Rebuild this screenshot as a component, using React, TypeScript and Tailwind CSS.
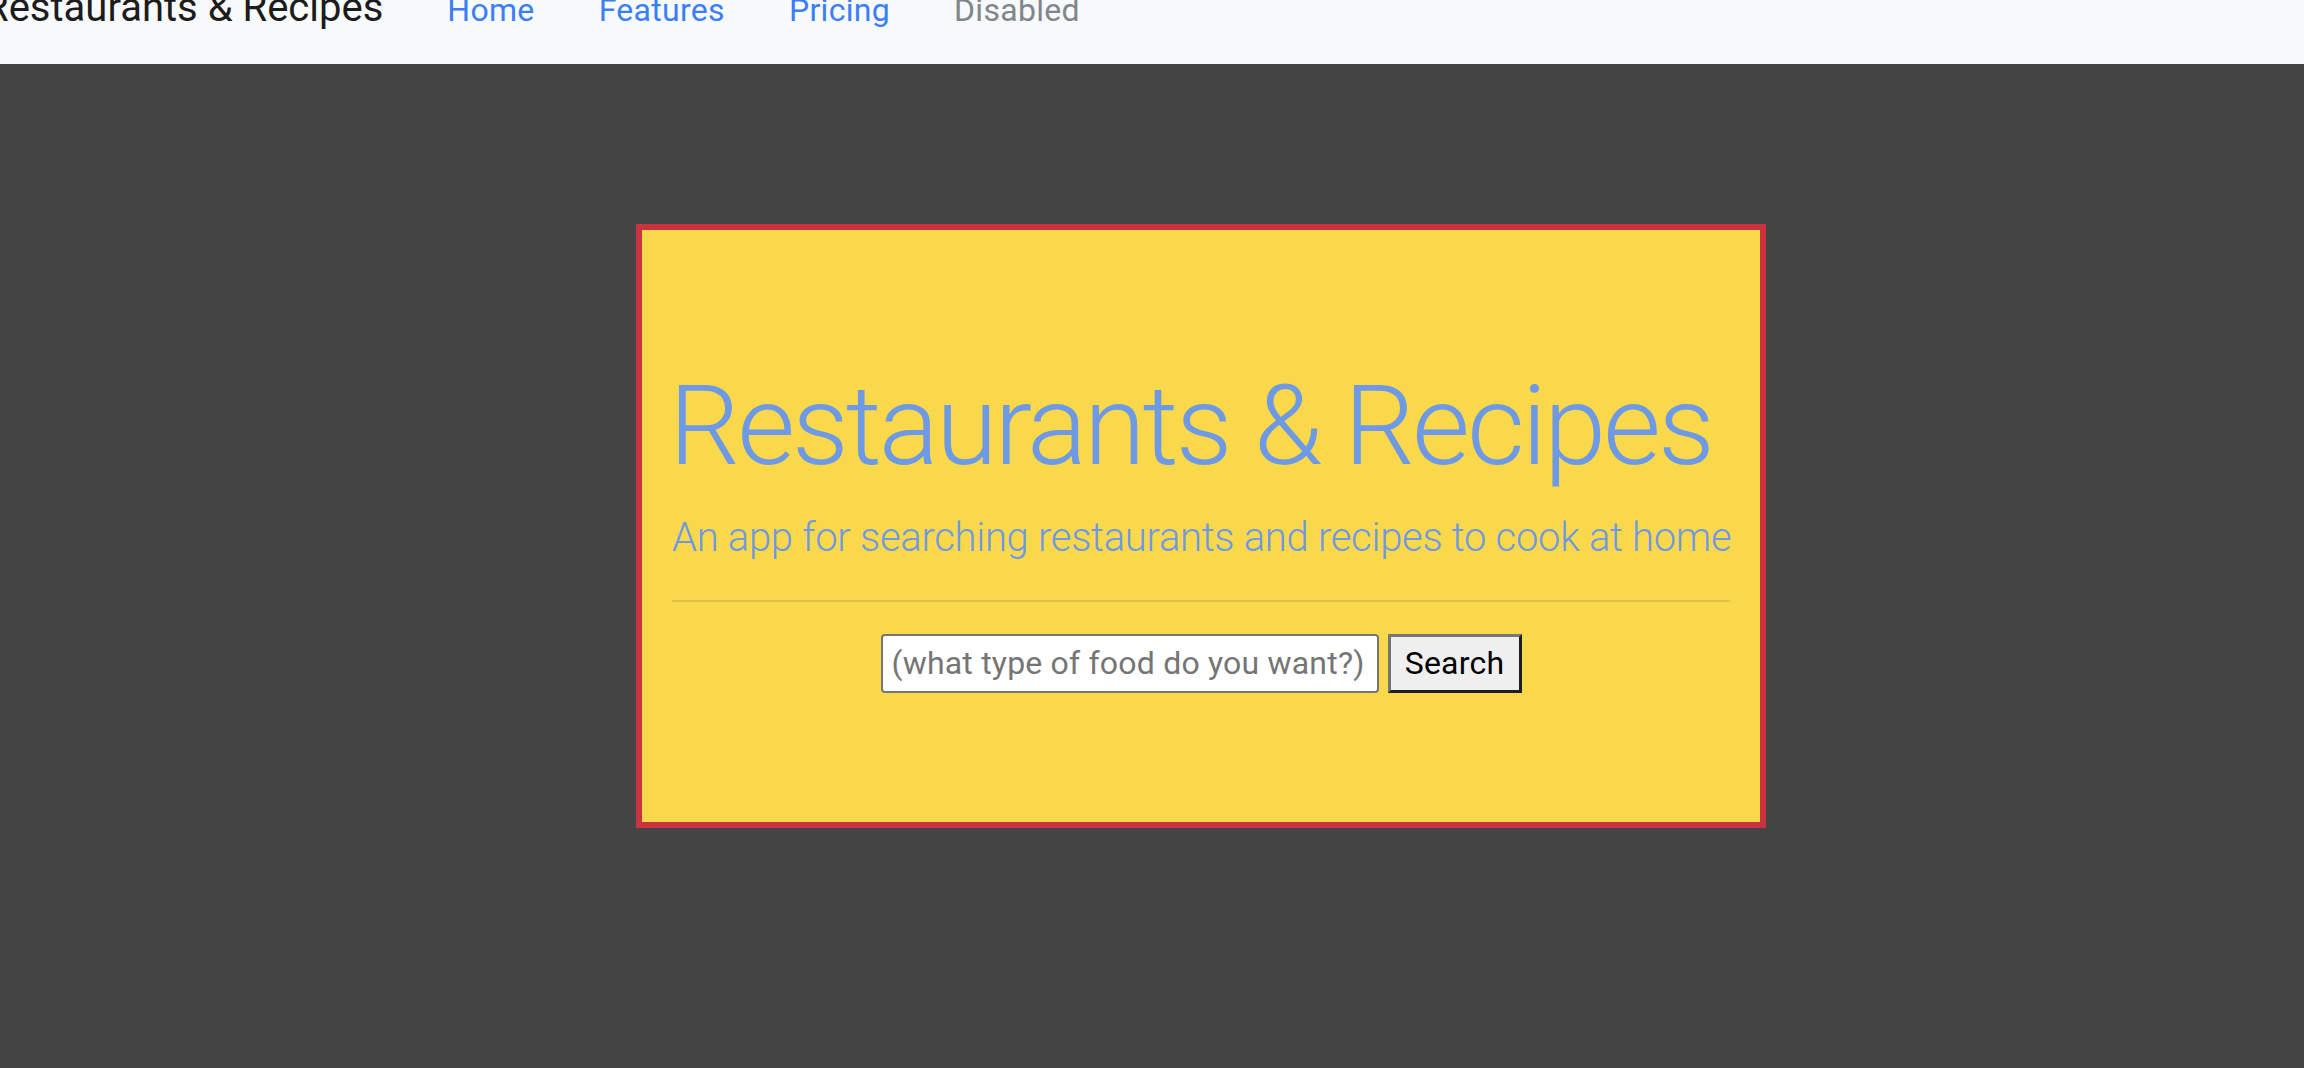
import { useState } from 'react'

const NAV_LINKS = ['Home', 'Features', 'Pricing']

export default function App() {
  const [query, setQuery] = useState('')

  return (
    <div className="min-h-screen bg-[#444444] font-['Roboto',sans-serif]">
      {/* navbar, top is cut off in the screenshot */}
      <nav className="h-[64px] bg-[#f8f9fa] overflow-hidden">
        <div className="-mt-[22px] flex items-baseline gap-[64px] -ml-[16px] whitespace-nowrap">
          <a className="text-[40px] leading-[1.5] text-[#1c1c1c]">Restaurants &amp; Recipes</a>
          {NAV_LINKS.map((link) => (
            <a key={link} className="text-[32px] leading-[1.5] text-[#3a7ff6] tracking-[0.3px]">
              {link}
            </a>
          ))}
          <a className="text-[32px] leading-[1.5] text-[#80868b] tracking-[0.3px]">Disabled</a>
        </div>
      </nav>

      {/* hero */}
      <section className="pt-[160px]">
        <div className="ml-[636px] w-[1130px] h-[604px] border-[6px] border-[#c9323f] bg-[#fad84b] px-[30px] flex flex-col justify-center">
          <h1 className="-ml-[3px] text-[112px] leading-[1.2] font-light text-[#6e99e4] tracking-[-3px] whitespace-nowrap mb-[14px]">
            Restaurants &amp; Recipes
          </h1>
          <p className="text-[40px] leading-[1.5] font-light text-[#6e99e4] tracking-[-0.3px] whitespace-nowrap">
            An app for searching restaurants and recipes to cook at home
          </p>
          <hr className="my-[32px] border-0 h-[2px] bg-[#dfc24a]" />
          <form className="flex justify-center gap-[9px]" onSubmit={(e) => e.preventDefault()}>
            <input
              value={query}
              onChange={(e) => setQuery(e.target.value)}
              placeholder="(what type of food do you want?)"
              className="w-[498px] h-[59px] bg-white border-2 border-[#767676] rounded-[4px] pl-[9px] pr-[4px] text-[32px] tracking-[0.2px] text-black placeholder:text-[#757575] outline-none"
            />
            <button
              type="submit"
              className="w-[134px] h-[59px] bg-[#efefef] border-[3px] border-t-[#767676] border-l-[#767676] border-r-[#1e1e1e] border-b-[#1e1e1e] text-[32px] tracking-[0.2px] text-black"
            >
              Search
            </button>
          </form>
        </div>
      </section>
    </div>
  )
}
